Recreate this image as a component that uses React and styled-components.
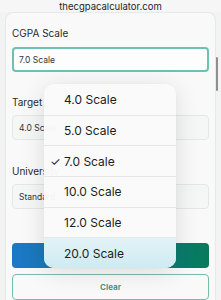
import React from "react";
import styled, { createGlobalStyle } from "styled-components";

const Global = createGlobalStyle`
  html, body { margin: 0; padding: 0; }
  body {
    width: 221px; height: 300px; overflow: hidden;
    background: #f3f3f3;
    font-family: Inter, "Noto Sans", sans-serif;
    color: #2a2a2a;
  }
`;

const Page = styled.div`
  position: relative;
  width: 221px;
  height: 300px;
  overflow: hidden;
  display: flex;
  flex-direction: column;
`;

const UrlBar = styled.div`
  height: 13px;
  display: flex;
  align-items: center;
  justify-content: center;
  font-size: 9.5px;
  color: #1f1f1f;
  background: #f6f6f6;
`;

const Card = styled.div`
  margin: 0 5px;
  flex: 1;
  background: #f9f9f9;
  border: 1px solid #e2ebe8;
  border-bottom: none;
  border-radius: 8px 8px 0 0;
  padding: 14px 6px 0 6px;
  display: flex;
  flex-direction: column;
`;

const Field = styled.div`
  display: flex;
  flex-direction: column;
  margin-bottom: ${(p) => p.$mb || 0}px;
`;

const Label = styled.div`
  font-size: 10px;
  line-height: 12px;
  color: #2b2b2b;
  margin-bottom: ${(p) => p.$gap}px;
`;

const Input = styled.div`
  height: 25px;
  box-sizing: border-box;
  border: ${(p) => (p.$active ? "2px solid #6cc2b2" : "1px solid #e3e8e6")};
  border-radius: 4px;
  background: ${(p) => (p.$active ? "#fdfdfd" : "#f5f7f6")};
  display: flex;
  align-items: center;
  padding-left: ${(p) => (p.$active ? 5 : 6)}px;
  font-size: 8.5px;
  color: #333;
`;

const PrimaryButton = styled.div`
  margin-top: 34px;
  height: 25px;
  border-radius: 4px;
  background: linear-gradient(90deg, #1d77c9 0%, #137c8e 55%, #077a5b 100%);
`;

const ClearButton = styled.div`
  margin-top: 6px;
  height: 26px;
  box-sizing: border-box;
  border: 1.5px solid #76bcae;
  border-radius: 4px;
  display: flex;
  align-items: center;
  justify-content: center;
  font-size: 8px;
  font-weight: 700;
  color: #3d9b87;
  background: #f9f9f9;
`;

const ScrollIndicator = styled.div`
  position: absolute;
  left: 216px;
  top: 57px;
  width: 2px;
  height: 34px;
  border-radius: 1px;
  background: #8e8e8e;
`;

const Menu = styled.div`
  position: absolute;
  left: 44px;
  top: 84px;
  width: 132px;
  border-radius: 10px;
  overflow: hidden;
  background: rgba(250, 250, 250, 0.97);
  box-shadow: 0 4px 24px rgba(0, 0, 0, 0.12), 0 0 1px rgba(0, 0, 0, 0.08);
  display: flex;
  flex-direction: column;
`;

const Option = styled.div`
  height: 30.7px;
  box-sizing: border-box;
  display: flex;
  align-items: center;
  position: relative;
  padding-left: 20px;
  font-size: 12px;
  color: #1d1d1d;
  border-top: ${(p) => (p.$first ? "none" : "1px solid #e6e8e8")};
  background: ${(p) =>
    p.$highlight
      ? "linear-gradient(180deg, #e3f3f7 0%, #cdebf1 100%)"
      : "transparent"};
`;

const Check = styled.span`
  position: absolute;
  left: 6px;
  font-size: 12px;
`;

const options = ["4.0 Scale", "5.0 Scale", "7.0 Scale", "10.0 Scale", "12.0 Scale", "20.0 Scale"];

export default function App() {
  return (
    <Page>
      <Global />
      <UrlBar>thecgpacalculator.com</UrlBar>
      <Card>
        <Field $mb={24}>
          <Label $gap={8}>CGPA Scale</Label>
          <Input $active>7.0 Scale</Input>
        </Field>
        <Field $mb={25}>
          <Label $gap={7}>Target</Label>
          <Input>4.0 Scale</Input>
        </Field>
        <Field>
          <Label $gap={7}>University</Label>
          <Input>Standard</Input>
        </Field>
        <PrimaryButton />
        <ClearButton>Clear</ClearButton>
      </Card>
      <ScrollIndicator />
      <Menu>
        {options.map((o, i) => (
          <Option key={o} $first={i === 0} $highlight={i === options.length - 1}>
            {o === "7.0 Scale" && <Check>✓</Check>}
            {o}
          </Option>
        ))}
      </Menu>
    </Page>
  );
}
